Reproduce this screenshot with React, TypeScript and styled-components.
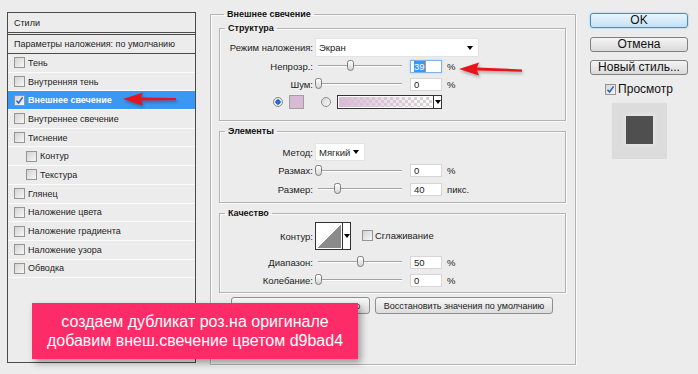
import React from 'react'
import styled, { createGlobalStyle, css } from 'styled-components'

const GlobalStyle = createGlobalStyle`
  * { box-sizing: border-box; }
  html, body { margin: 0; padding: 0; background: #ececec; }
  body {
    font-family: "Liberation Sans", Arial, sans-serif;
    font-size: 9.5px;
    color: #1c1c1c;
  }
`

interface StyleItem {
  label: string;
  checked?: boolean;
  selected?: boolean;
  nested?: boolean;
}

const styleItems: StyleItem[] = [
  { label: 'Тень' },
  { label: 'Внутренняя тень' },
  { label: 'Внешнее свечение', checked: true, selected: true },
  { label: 'Внутреннее свечение' },
  { label: 'Тиснение' },
  { label: 'Контур', nested: true },
  { label: 'Текстура', nested: true },
  { label: 'Глянец' },
  { label: 'Наложение цвета' },
  { label: 'Наложение градиента' },
  { label: 'Наложение узора' },
  { label: 'Обводка' },
]

const TRACK = 84

const Check = ({ checked }: { checked?: boolean }) => (
  <CheckBox>
    {checked && (
      <svg width='9' height='9' viewBox='0 0 9 9'>
        <path d='M1.5 4.8 L3.6 7 L7.6 1.4' fill='none' stroke='#2b62c9' strokeWidth='1.6' />
      </svg>
    )}
  </CheckBox>
)

const Slider = ({ ratio }: { ratio: number }) => (
  <SliderBox>
    <Track />
    <Thumb style={{ left: 3 + ratio * TRACK - 3.5 }} />
  </SliderBox>
)

const Arrow = ({ left, top, width, tilt = 0 }: { left: number; top: number; width: number; tilt?: number }) => (
  <ArrowSvg style={{ left, top }} width={width + 4} height={18} viewBox={`0 0 ${width + 4} 18`}>
    <polygon
      points={`1,8 21,1.5 19,6.6 ${width},${6.9 + tilt} ${width},${9.3 + tilt} 19,9.6 21,14.5`}
      fill='#e8141c'
    />
  </ArrowSvg>
)

const App = () => {
  return (
    <Page>
      <GlobalStyle />

      <StylesPanel>
        <PanelHeader>Стили</PanelHeader>
        <BlendRow>Параметры наложения: по умолчанию</BlendRow>
        {styleItems.map((item) => (
          <StyleRow key={item.label} $selected={item.selected} $nested={item.nested}>
            <Check checked={item.checked} />
            {item.label}
          </StyleRow>
        ))}
      </StylesPanel>

      <OuterGroup>
        <Legend>Внешнее свечение</Legend>

        <Group $height={99}>
          <Legend>Структура</Legend>
          <Row $h={19} $top={4}>
            <FieldLabel>Режим наложения:</FieldLabel>
            <DropSelect $w={164}>
              Экран
              <Caret />
            </DropSelect>
          </Row>
          <Row $h={18}>
            <FieldLabel>Непрозр.:</FieldLabel>
            <Slider ratio={0.39} />
            <NumberInput $focused>
              <Selection>39</Selection>
            </NumberInput>
            <Unit>%</Unit>
          </Row>
          <Row $h={18}>
            <FieldLabel>Шум:</FieldLabel>
            <Slider ratio={0} />
            <NumberInput>0</NumberInput>
            <Unit>%</Unit>
          </Row>
          <ColorRow>
            <Radio $on />
            <Swatch />
            <Radio />
            <GradientPicker>
              <GradientFill />
              <DropButton>
                <Caret />
              </DropButton>
            </GradientPicker>
          </ColorRow>
        </Group>

        <Group $height={78}>
          <Legend>Элементы</Legend>
          <Row $h={18} $top={6}>
            <FieldLabel>Метод:</FieldLabel>
            <DropSelect $w={50}>
              Мягкий
              <Caret />
            </DropSelect>
          </Row>
          <Row $h={19}>
            <FieldLabel>Размах:</FieldLabel>
            <Slider ratio={0} />
            <NumberInput>0</NumberInput>
            <Unit>%</Unit>
          </Row>
          <Row $h={18}>
            <FieldLabel>Размер:</FieldLabel>
            <Slider ratio={0.23} />
            <NumberInput>40</NumberInput>
            <Unit>пикс.</Unit>
          </Row>
        </Group>

        <Group $height={86}>
          <Legend>Качество</Legend>
          <Row $h={28} $top={3}>
            <FieldLabel>Контур:</FieldLabel>
            <ContourPicker>
              <ContourSwatch />
              <DropButton>
                <Caret />
              </DropButton>
            </ContourPicker>
            <Smoothing>
              <Check />
              Сглаживание
            </Smoothing>
          </Row>
          <Row $h={18} $top={3}>
            <FieldLabel>Диапазон:</FieldLabel>
            <Slider ratio={0.5} />
            <NumberInput>50</NumberInput>
            <Unit>%</Unit>
          </Row>
          <Row $h={18}>
            <FieldLabel>Колебание:</FieldLabel>
            <Slider ratio={0} />
            <NumberInput>0</NumberInput>
            <Unit>%</Unit>
          </Row>
        </Group>

        <ButtonRow>
          <DialogButton $w={139}>Использовать по умолчанию</DialogButton>
          <DialogButton $w={178}>Восстановить значения по умолчанию</DialogButton>
        </ButtonRow>
      </OuterGroup>

      <Side>
        <SideButton $primary>OK</SideButton>
        <SideButton>Отмена</SideButton>
        <SideButton>Новый стиль...</SideButton>
        <PreviewToggle>
          <Check checked />
          Просмотр
        </PreviewToggle>
        <Preview>
          <PreviewSquare />
        </Preview>
      </Side>

      <Banner>
        создаем дубликат роз.на оригинале
        <br />
        добавим внеш.свечение цветом d9bad4
      </Banner>

      <Arrow left={122} top={91} width={54} />
      <Arrow left={458} top={61} width={64} tilt={1.5} />
    </Page>
  )
}

const Page = styled.div`
  position: relative;
  display: flex;
  align-items: flex-start;
  width: 698px;
  height: 374px;
  padding: 8px 0 0 7px;
  overflow: hidden;
`

const StylesPanel = styled.div`
  display: flex;
  flex-direction: column;
  flex: none;
  width: 189px;
  height: 351px;
  margin-top: 4px;
  border: 1px solid #4b4b4b;
  background: #ececec;
  font-size: 9px;
`

const PanelHeader = styled.div`
  display: flex;
  align-items: center;
  height: 20px;
  padding-left: 6px;
  border-bottom: 1px solid #4b4b4b;
`

const BlendRow = styled.div`
  display: flex;
  align-items: center;
  height: 20px;
  margin-top: 1px;
  padding-left: 6px;
  border-top: 1px solid #4b4b4b;
  border-bottom: 1px solid #4b4b4b;
`

const StyleRow = styled.div<{ $selected?: boolean; $nested?: boolean }>`
  display: flex;
  align-items: center;
  gap: 3px;
  height: 18.7px;
  padding-left: ${({ $nested }) => ($nested ? '18px' : '6px')};
  border-bottom: 1px solid #fbfbfb;

  ${({ $selected }) => $selected && css`
    background: #3a98f4;
    color: #fff;
    font-weight: bold;
  `}
`

const CheckBox = styled.span`
  display: flex;
  align-items: center;
  justify-content: center;
  flex: none;
  width: 11px;
  height: 11px;
  border: 1px solid #959595;
  background: linear-gradient(135deg, #d3d3d3, #f7f7f7);
`

const OuterGroup = styled.fieldset`
  flex: none;
  width: 366px;
  height: 357px;
  margin: 0 0 0 14px;
  padding: 2px 9px 0 8px;
  border: 1px solid #b3b3b3;
  box-shadow: inset 1px 1px 0 #fafafa, 1px 1px 0 #fafafa;
  min-inline-size: 0;
`

const Group = styled.fieldset<{ $height: number }>`
  height: ${({ $height }) => $height}px;
  margin: 0 0 4px;
  padding: 0;
  border: 1px solid #b3b3b3;
  box-shadow: inset 1px 1px 0 #fafafa, 1px 1px 0 #fafafa;
  min-inline-size: 0;
`

const Legend = styled.legend`
  margin-left: 5px;
  padding: 0 3px;
  font-size: 9px;
  font-weight: bold;
  line-height: 12px;
  color: #111;
`

const Row = styled.div<{ $h: number; $top?: number }>`
  display: flex;
  align-items: center;
  height: ${({ $h }) => $h}px;
  margin-top: ${({ $top }) => $top || 0}px;
`

const FieldLabel = styled.span`
  flex: none;
  width: 93px;
  margin-right: 2px;
  text-align: right;
  white-space: nowrap;
`

const DropSelect = styled.div<{ $w: number }>`
  display: flex;
  align-items: center;
  justify-content: space-between;
  width: ${({ $w }) => $w}px;
  height: 100%;
  padding: 0 5px 0 3px;
  background: #fff;
  border: 1px solid #e3e3e3;
`

const Caret = styled.span`
  width: 0;
  height: 0;
  border-left: 3.5px solid transparent;
  border-right: 3.5px solid transparent;
  border-top: 4px solid #000;
`

const SliderBox = styled.div`
  position: relative;
  display: flex;
  align-items: center;
  flex: none;
  width: 90px;
  height: 12px;
  padding: 0 3px;
`

const Track = styled.div`
  flex: 1;
  height: 2px;
  border-top: 1px solid #a3a3a3;
  border-bottom: 1px solid #fdfdfd;
`

const Thumb = styled.span`
  position: absolute;
  top: 0;
  width: 7px;
  height: 11px;
  border: 1px solid #7d7d7d;
  border-radius: 3px 3px 4px 4px;
  background: linear-gradient(#ffffff, #d4d4d4);
`

const NumberInput = styled.div<{ $focused?: boolean }>`
  display: flex;
  align-items: center;
  width: 32px;
  height: 13px;
  margin-left: 5px;
  padding-left: 3px;
  background: #fff;
  border: 1px solid ${({ $focused }) => ($focused ? '#80b3e6' : '#d6d6d6')};
  box-shadow: ${({ $focused }) => ($focused ? '0 0 2px #a9d0f7' : 'none')};
`

const Selection = styled.span`
  background: #3399ff;
  color: #fff;
  line-height: 11px;
  border-right: 1px solid #e08a2c;
`

const Unit = styled.span`
  margin-left: 5px;
`

const ColorRow = styled.div`
  display: flex;
  align-items: center;
  gap: 6px;
  height: 18px;
  padding-left: 53px;
`

const Radio = styled.span<{ $on?: boolean }>`
  flex: none;
  width: 10px;
  height: 10px;
  border-radius: 50%;
  border: 1px solid #8a8a8a;
  background: ${({ $on }) =>
    $on
      ? 'radial-gradient(circle, #1d6fd0 0 2.4px, #e9e9e9 2.9px)'
      : 'linear-gradient(135deg, #d6d6d6, #fafafa)'};
`

const Swatch = styled.span`
  flex: none;
  width: 15px;
  height: 14px;
  margin-right: 11px;
  border: 1px solid #a0a0a0;
  background: #d9bad4;
`

const GradientPicker = styled.div`
  display: flex;
  width: 105px;
  height: 14px;
  border: 1px solid #333;
`

const GradientFill = styled.span`
  flex: 1;
  border: 1px solid #fff;
  background-color: #fff;
  background-image:
    linear-gradient(to right, #d9bad4, rgba(217, 186, 212, 0)),
    linear-gradient(45deg, #d4d4d4 25%, transparent 25%, transparent 75%, #d4d4d4 75%),
    linear-gradient(45deg, #d4d4d4 25%, transparent 25%, transparent 75%, #d4d4d4 75%);
  background-size: 100% 100%, 6px 6px, 6px 6px;
  background-position: 0 0, 0 0, 3px 3px;
`

const DropButton = styled.span`
  display: flex;
  align-items: center;
  justify-content: center;
  flex: none;
  width: 8px;
  border-left: 1px solid #333;
  background: #fff;
`

const ContourPicker = styled.div`
  display: flex;
  flex: none;
  width: 36px;
  height: 28px;
  border: 1px solid #333;
`

const ContourSwatch = styled.span`
  flex: 1;
  border: 1px solid #fff;
  background: linear-gradient(to top left, #8b8b8b 50%, #ffffff 50%);
`

const Smoothing = styled.span`
  display: flex;
  align-items: center;
  gap: 2px;
  margin-left: 11px;
  margin-bottom: 2px;
`

const ButtonRow = styled.div`
  display: flex;
  gap: 5px;
  padding-left: 12px;
`

const DialogButton = styled.button<{ $w: number }>`
  width: ${({ $w }) => $w}px;
  height: 17px;
  padding: 0;
  font-family: inherit;
  font-size: 9px;
  white-space: nowrap;
  color: #1c1c1c;
  border: 1px solid #8e8e8e;
  border-radius: 3px;
  background: linear-gradient(#f7f7f7, #dcdcdc);
`

const Side = styled.div`
  display: flex;
  flex-direction: column;
  align-items: center;
  flex: none;
  width: 98px;
  margin: 5px 0 0 14px;
`

const SideButton = styled.button<{ $primary?: boolean }>`
  width: 100%;
  height: 15px;
  margin-bottom: 8.5px;
  padding: 0;
  font-family: "Liberation Sans", Arial, sans-serif;
  font-size: 12px;
  line-height: 13px;
  color: #111;
  border: 1px solid #808080;
  border-radius: 3px;
  background: linear-gradient(#f4f4f4, #dadada);

  ${({ $primary }) => $primary && css`
    border-color: #3d8fd4;
    background: linear-gradient(#e9f5fd, #c3e2f6);
    box-shadow: 0 0 2px #7cc0f0;
  `}
`

const PreviewToggle = styled.div`
  display: flex;
  align-items: center;
  gap: 2px;
  height: 11px;
  font-size: 12px;
  color: #111;
`

const Preview = styled.div`
  display: flex;
  align-items: center;
  justify-content: center;
  width: 56px;
  height: 57px;
  margin-top: 7px;
  background: #dcdcdc;
  box-shadow: inset 1px 1px 0 #eaeaea;
`

const PreviewSquare = styled.div`
  width: 27px;
  height: 28px;
  background: #4f4f4f;
  box-shadow: 0 0 4px 2px #e4e4e4;
`

const Banner = styled.div`
  position: absolute;
  left: 32px;
  top: 303px;
  display: flex;
  flex-direction: column;
  justify-content: center;
  width: 326px;
  height: 56px;
  background: #fd2b67;
  box-shadow: 3px 4px 7px rgba(0, 0, 0, 0.35);
  color: #fff;
  font-size: 16px;
  line-height: 19px;
  text-align: center;
`

const ArrowSvg = styled.svg`
  position: absolute;
  filter: drop-shadow(1px 2px 1.5px rgba(0, 0, 0, 0.3));
`

export default App
